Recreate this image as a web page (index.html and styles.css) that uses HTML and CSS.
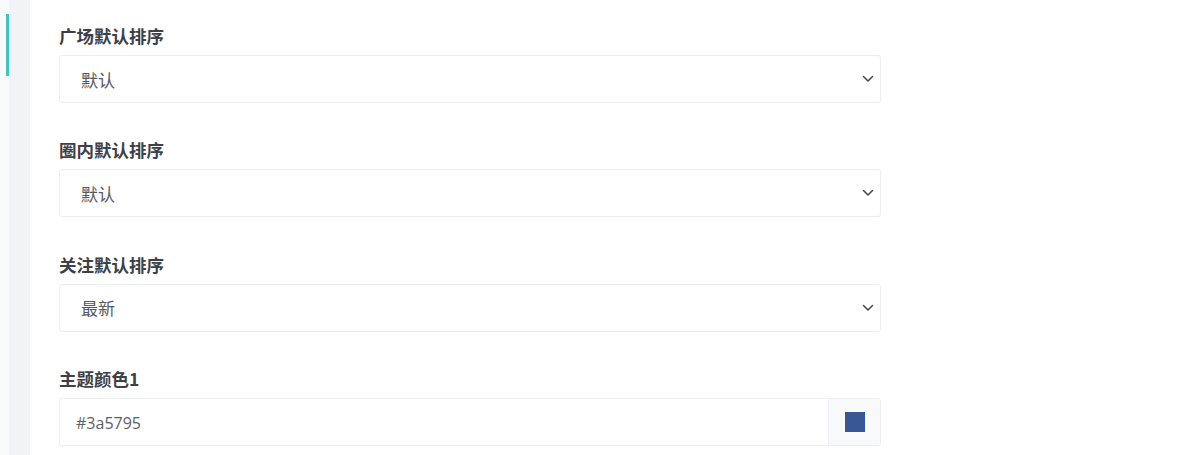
FILE: index.html
```html
<!DOCTYPE html>
<html lang="zh">
<head>
<meta charset="utf-8">
<link rel="stylesheet" href="styles.css">
</head>
<body>
<div class="page">
  <aside class="rail"><span class="rail-mark"></span></aside>
  <main class="content">
    <div class="group">
      <label class="label">广场默认排序</label>
      <div class="select"><span>默认</span><svg class="chev" viewBox="0 0 12 8" width="12" height="8"><path d="M1.5 1.5 L6 6 L10.5 1.5" fill="none" stroke="#444" stroke-width="1.5" stroke-linecap="round" stroke-linejoin="round"/></svg></div>
    </div>
    <div class="group">
      <label class="label">圈内默认排序</label>
      <div class="select"><span>默认</span><svg class="chev" viewBox="0 0 12 8" width="12" height="8"><path d="M1.5 1.5 L6 6 L10.5 1.5" fill="none" stroke="#444" stroke-width="1.5" stroke-linecap="round" stroke-linejoin="round"/></svg></div>
    </div>
    <div class="group">
      <label class="label">关注默认排序</label>
      <div class="select"><span>最新</span><svg class="chev" viewBox="0 0 12 8" width="12" height="8"><path d="M1.5 1.5 L6 6 L10.5 1.5" fill="none" stroke="#444" stroke-width="1.5" stroke-linecap="round" stroke-linejoin="round"/></svg></div>
    </div>
    <div class="group">
      <label class="label">主题颜色1</label>
      <div class="color-input">
        <span class="color-text">#3a5795</span>
        <span class="color-addon"><span class="swatch"></span></span>
      </div>
    </div>
  </main>
</div>
</body>
</html>
```

FILE: styles.css
```css
html, body {
  margin: 0;
  padding: 0;
  background: #ffffff;
  font-family: "Noto Sans CJK SC", "Noto Sans", sans-serif;
}
.page {
  display: flex;
  height: 455px;
  overflow: hidden;
}
.rail {
  width: 30px;
  flex: none;
  background: linear-gradient(to right, #f9fafc 0 9px, #f1f3f7 9px 100%);
  position: relative;
}
.rail-mark {
  position: absolute;
  left: 6px;
  top: 14px;
  width: 3px;
  height: 62px;
  background: #3fc4be;
}
.content {
  flex: 1;
  padding: 26px 0 0 29px;
}
.group {
  width: 822px;
  margin-bottom: 37.4px;
}
.label {
  display: block;
  height: 20px;
  line-height: 20px;
  font-size: 17.5px;
  font-weight: 700;
  color: #3d4046;
  margin-bottom: 9px;
}
.select {
  box-sizing: border-box;
  height: 48px;
  border: 1px solid #eceef1;
  border-radius: 3px;
  display: flex;
  align-items: center;
  justify-content: space-between;
  padding: 0 6px 0 21px;
  font-size: 17px;
  color: #555a60;
}
.chev {
  margin-right: 0;
}
.color-input {
  box-sizing: border-box;
  height: 48px;
  border: 1px solid #eceef1;
  border-radius: 3px;
  display: flex;
  align-items: stretch;
}
.color-text {
  flex: 1;
  display: flex;
  align-items: center;
  padding-left: 16px;
  padding-top: 2px;
  font-family: "Open Sans", "Noto Sans", sans-serif;
  font-size: 16px;
  color: #5a5f66;
}
.color-addon {
  width: 51px;
  background: #f8f9fa;
  border-left: 1px solid #eceef1;
  display: flex;
  align-items: center;
  justify-content: center;
}
.swatch {
  width: 20px;
  height: 20px;
  background: #3a5795;
}
```
